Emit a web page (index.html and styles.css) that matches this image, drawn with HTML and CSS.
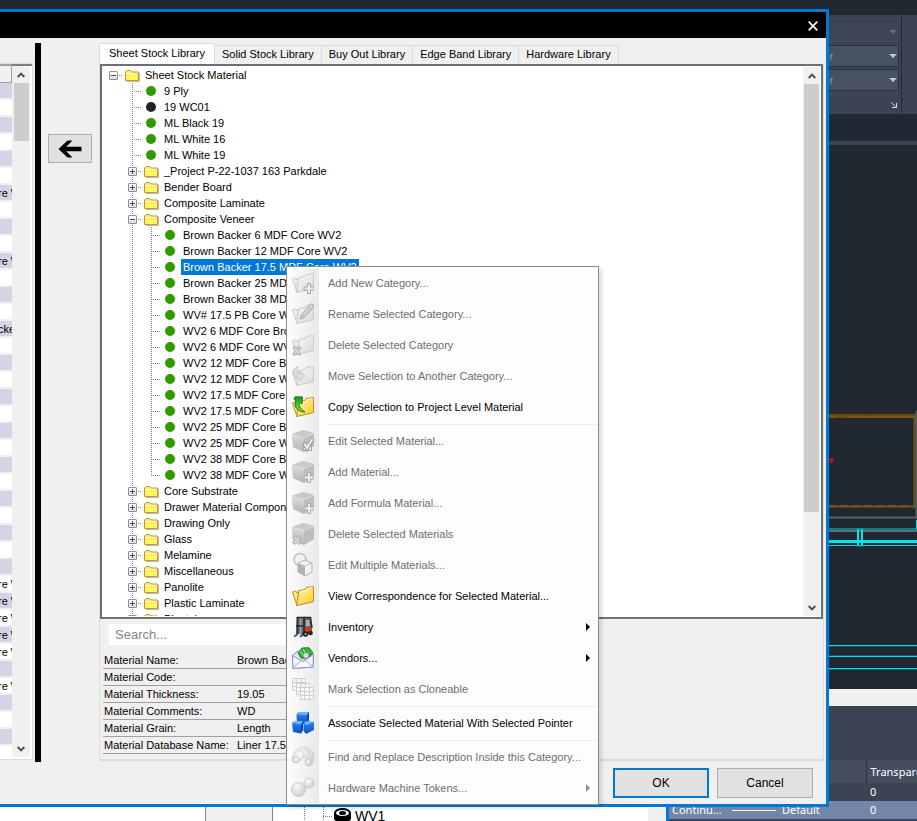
FILE: index.html
```html
<!DOCTYPE html>
<html lang="en">
<head>
<meta charset="utf-8">
<title>Sheet Stock Library</title>
<link rel="stylesheet" href="styles.css">
</head>
<body>
<svg class="defs" aria-hidden="true">
  <defs>
    <linearGradient id="g-gold" x1="0" y1="0" x2="1" y2="1"><stop offset="0" stop-color="#fffbc0"/><stop offset="1" stop-color="#ffc91c"/></linearGradient>
    <linearGradient id="g-pale" x1="0" y1="0" x2="1" y2="1"><stop offset="0" stop-color="#f8f8f8"/><stop offset="1" stop-color="#dadada"/></linearGradient>
    <linearGradient id="g-side" x1="0" y1="0" x2="0" y2="1"><stop offset="0" stop-color="#dcdcdc"/><stop offset="1" stop-color="#b4b4b4"/></linearGradient>
    <linearGradient id="g-green" x1="0" y1="0" x2="0" y2="1"><stop offset="0" stop-color="#1f9a1f"/><stop offset="1" stop-color="#7fe04a"/></linearGradient>
    <linearGradient id="g-blue" x1="0" y1="0" x2="0" y2="1"><stop offset="0" stop-color="#2f8cf5"/><stop offset="1" stop-color="#0a4fbd"/></linearGradient>
    <radialGradient id="g-ball" cx=".38" cy=".3" r=".75"><stop offset="0" stop-color="#fafafa"/><stop offset="1" stop-color="#cccccc"/></radialGradient>
  </defs>
  <symbol id="folder" viewBox="0 0 15 13">
    <path d="M2 12.5H14.5V4" fill="none" stroke="#b9b9b9"/>
    <path d="M.5 11.5V3L2 1.500H5.500L7 3H13.500V11.500Z" fill="#ffee6e" stroke="#cf962c"/>
    <path d="M1.500 4.500H12.500" stroke="#fffbd0"/><path d="M5 8h7v3H3z" fill="#ffff4e"/>
  </symbol>
  <symbol id="dot" viewBox="0 0 10 10"><circle cx="5" cy="5" r="5" fill="currentColor"/></symbol>
  <symbol id="up" viewBox="0 0 8 6"><path d="M.7 5 4 1.600 7.300 5" fill="none" stroke="#505050" stroke-width="2"/></symbol>
  <symbol id="down" viewBox="0 0 8 6"><path d="M.7 1 4 4.400 7.300 1" fill="none" stroke="#505050" stroke-width="2"/></symbol>
  <symbol id="m-folder" viewBox="0 0 22 22">
    <path d="M.5 7 4 6 5 8 7 6 5 20.500Z" fill="url(#g-pale)" stroke="#cacaca"/>
    <path d="M7 5.500 13 4.500 14 2.500 21.500 1.500V16.500L4.500 20.500Z" fill="url(#g-pale)" stroke="#cacaca"/>
  </symbol>
  <symbol id="m-gold" viewBox="0 0 22 22">
    <path d="M.5 7 4 6 5 8 7 6 5 20.500Z" fill="#ffe98a" stroke="#c08a1e"/>
    <path d="M7 5.500 13 4.500 14 2.500 21.500 1.500V16.500L4.500 20.500Z" fill="url(#g-gold)" stroke="#c08a1e"/>
    <path d="M8 6.500 14 5.500 15 3.500 20.500 2.700" fill="none" stroke="#fffce0"/>
  </symbol>
  <symbol id="m-cube" viewBox="0 0 22 22">
    <path d="M0 4 11 0 22 3 22 16 12 22 1 17Z" fill="#d2d2d2"/>
    <path d="M0 4 11 0 22 3 12 7Z" fill="#c9c9c9"/>
    <path d="M0 4 12 7V22L1 17Z" fill="url(#g-side)"/>
    <path d="M12 7 22 3V16L12 22Z" fill="#bdbdbd"/><path d="M1 4.500 12 7.500 21.500 3.500" fill="none" stroke="#dedede"/>
  </symbol>
  <symbol id="m-plus" viewBox="0 0 22 22"><path d="M15.500 11.500h3v3.500h3.500v3h-3.500v3.500h-3v-3.500h-3.500v-3h3.500z" fill="#ececec" stroke="#a6a6a6"/></symbol>
  <symbol id="m-x" viewBox="0 0 22 22"><path d="M.8 14 3 12.500 5 15 7 12.500 9 14 6.700 16.800 9 20 7 21.500 5 19 3 21.500 .8 20 3 16.800Z" fill="#d6d6d6" stroke="#a9a9a9"/></symbol>
</svg>

<div class="desktop">
  <section class="cad" aria-label="Drawing application">
    <div class="ribbon">
      <div class="combos">
        <label class="combo dim"><select aria-label="Object color" disabled><option></option></select></label>
        <label class="combo"><select aria-label="Line weight"><option>ByLayer</option></select></label>
        <label class="combo"><select aria-label="Line type"><option>ByLayer</option></select></label>
        <svg class="launcher" viewBox="0 0 6 6"><path d="M.5 .5 4.500 4.500M5.500 1V5.500H1" fill="none" stroke="#d8dce4"/></svg>
      </div>
      <div class="next-group"></div>
    </div>
    <div class="viewbar"></div>
    <svg class="drawing" viewBox="0 0 88 544" width="88" height="544">
      <path d="M0 271h86" stroke="#7a5607" stroke-width="4"/><path d="M0 270h88M8 272h10M36 270h8" stroke="#5e4408"/>
      <path d="M85.500 271v92" stroke="#7a5607" stroke-width="2"/>
      <path d="M0 361.500h86" stroke="#7a5607" stroke-width="2"/><path d="M0 360.500h86" stroke="#606050" stroke-dasharray="7 5"/>
      <path d="M87.500 266v106M0 372.500h88" stroke="#566068" stroke-width="2"/>
      <path d="M0 314.500h5M4 315 1 318" stroke="#f00" fill="none" stroke-width="1.500"/>
      <path d="M0 384h88" stroke="#008088" stroke-width="2"/><path d="M0 386h88" stroke="#666b70" stroke-width="2"/>
      <path d="M0 396.500h88" stroke="#00e6ee" stroke-width="3"/><path d="M0 400.500h88" stroke="#00d4dc"/>
      <path d="M29 384v17M33 384v17" stroke="#00e6ee" stroke-width="2"/><path d="M28 384h6M28 401h6" stroke="#00a6ae"/>
      <path d="M87.500 375v9" stroke="#00e6ee" stroke-width="1"/>
      <path d="M0 500.500h88M0 511.500h88M0 523.500h88" stroke="#00e0e8"/>
      <path d="M0 501.500h88M0 510.500h88M0 524.500h88" stroke="#0b6268"/>
    </svg>
    <div class="hscroll"></div>
    <div class="layers">
      <table>
        <thead><tr><th></th><th></th><th></th><th>Transparency</th></tr></thead>
        <tbody>
          <tr><td></td><td></td><td></td><td>0</td></tr>
          <tr class="on"><td>Continu...</td><td><i class="weight"></i></td><td>Default</td><td>0</td></tr>
        </tbody>
      </table>
    </div>
  </section>

  <section class="project" aria-label="Project pointers">
    <div class="blank"></div><div class="mid"></div>
    <div class="pointers">
      <i class="guide"></i><i class="guide elbow"></i>
      <svg class="spool" viewBox="0 0 17 15"><path d="M0 5v5c0 6 17 6 17 0V5z" fill="#000"/><ellipse cx="8.500" cy="5" rx="7.500" ry="4" fill="#fff" stroke="#000" stroke-width="2"/><ellipse cx="8.500" cy="5" rx="3.500" ry="2" fill="#000"/></svg>
      <span>WV1</span>
    </div>
    <div class="edge"></div>
  </section>

  <main class="dialog" role="dialog" aria-label="Material library">
    <header class="titlebar">
      <button class="close" aria-label="Close"><svg viewBox="0 0 10 10" width="10" height="10"><path d="M.7 .7 9.300 9.300M9.300 .7 .7 9.300" stroke="#fff" stroke-width="1.700"/></svg></button>
    </header>
    <div class="content">
      <div class="list">
        <table>
          <thead><tr><th></th></tr></thead>
          <tbody>
            <tr><td></td></tr><tr><td></td></tr><tr><td></td></tr><tr><td></td></tr><tr><td></td></tr><tr><td></td></tr>
            <tr><td>re WV2</td></tr><tr><td></td></tr><tr><td></td></tr><tr><td></td></tr>
            <tr><td>re WV2</td></tr><tr><td></td></tr><tr><td></td></tr><tr><td></td></tr>
            <tr><td>cker</td></tr><tr><td></td></tr><tr><td></td></tr><tr><td></td></tr><tr><td></td></tr><tr><td></td></tr>
            <tr><td></td></tr><tr><td></td></tr><tr><td></td></tr><tr><td></td></tr><tr><td></td></tr><tr><td></td></tr>
            <tr><td></td></tr><tr><td></td></tr><tr><td></td></tr>
            <tr><td>re WV2</td></tr><tr><td>re WV2</td></tr><tr><td>re WV2</td></tr><tr><td>re WV2</td></tr><tr><td>re WV2</td></tr>
            <tr><td></td></tr><tr><td>re WV2</td></tr><tr><td></td></tr><tr><td></td></tr><tr><td></td></tr><tr><td></td></tr>
          </tbody>
        </table>
        <div class="scroll"><svg class="arrow"><use href="#up"/></svg><div class="thumb short"></div><svg class="arrow"><use href="#down"/></svg></div>
      </div>
      <div class="splitter"></div>
      <button class="move" aria-label="Assign selected material"><svg viewBox="0 0 24 18" width="24" height="18"><path d="M23.500 9H4" fill="none" stroke="#000" stroke-width="4.500"/><path d="M14.500 .5H9.500L.5 9 9.500 17.500H14.500L6 9Z" fill="#000"/></svg></button>

      <div class="library">
        <div class="tabs" role="tablist">
          <button role="tab" aria-selected="true">Sheet Stock Library</button>
          <button role="tab">Solid Stock Library</button>
          <button role="tab">Buy Out Library</button>
          <button role="tab">Edge Band Library</button>
          <button role="tab">Hardware Library</button>
        </div>
        <div class="page">
          <div class="treebox">
            <ul class="tree">
              <li><i class="c h"><b></b></i><i class="c"><svg class="f"><use href="#folder"/></svg></i><span>Sheet Stock Material</span></li>
              <li><i class="c"></i><i class="c v h"></i><i class="c"><svg class="d"><use href="#dot"/></svg></i><span>9 Ply</span></li>
              <li><i class="c"></i><i class="c v h"></i><i class="c"><svg class="d dark"><use href="#dot"/></svg></i><span>19 WC01</span></li>
              <li><i class="c"></i><i class="c v h"></i><i class="c"><svg class="d"><use href="#dot"/></svg></i><span>ML Black 19</span></li>
              <li><i class="c"></i><i class="c v h"></i><i class="c"><svg class="d"><use href="#dot"/></svg></i><span>ML White 16</span></li>
              <li><i class="c"></i><i class="c v h"></i><i class="c"><svg class="d"><use href="#dot"/></svg></i><span>ML White 19</span></li>
              <li><i class="c"></i><i class="c v h"><b class="plus"></b></i><i class="c"><svg class="f"><use href="#folder"/></svg></i><span>_Project P-22-1037 163 Parkdale</span></li>
              <li><i class="c"></i><i class="c v h"><b class="plus"></b></i><i class="c"><svg class="f"><use href="#folder"/></svg></i><span>Bender Board</span></li>
              <li><i class="c"></i><i class="c v h"><b class="plus"></b></i><i class="c"><svg class="f"><use href="#folder"/></svg></i><span>Composite Laminate</span></li>
              <li><i class="c"></i><i class="c v h"><b></b></i><i class="c"><svg class="f"><use href="#folder"/></svg></i><span>Composite Veneer</span></li>
              <li><i class="c"></i><i class="c v"></i><i class="c v h"></i><i class="c"><svg class="d"><use href="#dot"/></svg></i><span>Brown Backer 6 MDF Core WV2</span></li>
              <li><i class="c"></i><i class="c v"></i><i class="c v h"></i><i class="c"><svg class="d"><use href="#dot"/></svg></i><span>Brown Backer 12 MDF Core WV2</span></li>
              <li><i class="c"></i><i class="c v"></i><i class="c v h"></i><i class="c"><svg class="d"><use href="#dot"/></svg></i><span class="sel">Brown Backer 17.5 MDF Core WV2</span></li>
              <li><i class="c"></i><i class="c v"></i><i class="c v h"></i><i class="c"><svg class="d"><use href="#dot"/></svg></i><span>Brown Backer 25 MDF Core WV2</span></li>
              <li><i class="c"></i><i class="c v"></i><i class="c v h"></i><i class="c"><svg class="d"><use href="#dot"/></svg></i><span>Brown Backer 38 MDF Core WV2</span></li>
              <li><i class="c"></i><i class="c v"></i><i class="c v h"></i><i class="c"><svg class="d"><use href="#dot"/></svg></i><span>WV# 17.5 PB Core WV2</span></li>
              <li><i class="c"></i><i class="c v"></i><i class="c v h"></i><i class="c"><svg class="d"><use href="#dot"/></svg></i><span>WV2 6 MDF Core Brown</span></li>
              <li><i class="c"></i><i class="c v"></i><i class="c v h"></i><i class="c"><svg class="d"><use href="#dot"/></svg></i><span>WV2 6 MDF Core WV2</span></li>
              <li><i class="c"></i><i class="c v"></i><i class="c v h"></i><i class="c"><svg class="d"><use href="#dot"/></svg></i><span>WV2 12 MDF Core Brown</span></li>
              <li><i class="c"></i><i class="c v"></i><i class="c v h"></i><i class="c"><svg class="d"><use href="#dot"/></svg></i><span>WV2 12 MDF Core WV2</span></li>
              <li><i class="c"></i><i class="c v"></i><i class="c v h"></i><i class="c"><svg class="d"><use href="#dot"/></svg></i><span>WV2 17.5 MDF Core Brown</span></li>
              <li><i class="c"></i><i class="c v"></i><i class="c v h"></i><i class="c"><svg class="d"><use href="#dot"/></svg></i><span>WV2 17.5 MDF Core WV2</span></li>
              <li><i class="c"></i><i class="c v"></i><i class="c v h"></i><i class="c"><svg class="d"><use href="#dot"/></svg></i><span>WV2 25 MDF Core Brown</span></li>
              <li><i class="c"></i><i class="c v"></i><i class="c v h"></i><i class="c"><svg class="d"><use href="#dot"/></svg></i><span>WV2 25 MDF Core WV2</span></li>
              <li><i class="c"></i><i class="c v"></i><i class="c v h"></i><i class="c"><svg class="d"><use href="#dot"/></svg></i><span>WV2 38 MDF Core Brown</span></li>
              <li><i class="c"></i><i class="c v"></i><i class="c v h end"></i><i class="c"><svg class="d"><use href="#dot"/></svg></i><span>WV2 38 MDF Core WV2</span></li>
              <li><i class="c"></i><i class="c v h"><b class="plus"></b></i><i class="c"><svg class="f"><use href="#folder"/></svg></i><span>Core Substrate</span></li>
              <li><i class="c"></i><i class="c v h"><b class="plus"></b></i><i class="c"><svg class="f"><use href="#folder"/></svg></i><span>Drawer Material Components</span></li>
              <li><i class="c"></i><i class="c v h"><b class="plus"></b></i><i class="c"><svg class="f"><use href="#folder"/></svg></i><span>Drawing Only</span></li>
              <li><i class="c"></i><i class="c v h"><b class="plus"></b></i><i class="c"><svg class="f"><use href="#folder"/></svg></i><span>Glass</span></li>
              <li><i class="c"></i><i class="c v h"><b class="plus"></b></i><i class="c"><svg class="f"><use href="#folder"/></svg></i><span>Melamine</span></li>
              <li><i class="c"></i><i class="c v h"><b class="plus"></b></i><i class="c"><svg class="f"><use href="#folder"/></svg></i><span>Miscellaneous</span></li>
              <li><i class="c"></i><i class="c v h"><b class="plus"></b></i><i class="c"><svg class="f"><use href="#folder"/></svg></i><span>Panolite</span></li>
              <li><i class="c"></i><i class="c v h"><b class="plus"></b></i><i class="c"><svg class="f"><use href="#folder"/></svg></i><span>Plastic Laminate</span></li>
              <li><i class="c"></i><i class="c v h"><b class="plus"></b></i><i class="c"><svg class="f"><use href="#folder"/></svg></i><span>Plastek</span></li>
            </ul>
            <div class="scroll"><svg class="arrow"><use href="#up"/></svg><div class="thumb long"></div><svg class="arrow"><use href="#down"/></svg></div>
          </div>
          <input class="search" type="text" placeholder="Search..." aria-label="Search materials">
          <table class="details">
            <tr><th>Material Name:</th><td>Brown Backer 17.5 MDF Core WV2</td></tr>
            <tr><th>Material Code:</th><td></td></tr>
            <tr><th>Material Thickness:</th><td>19.05</td></tr>
            <tr><th>Material Comments:</th><td>WD</td></tr>
            <tr><th>Material Grain:</th><td>Length</td></tr>
            <tr><th>Material Database Name:</th><td>Liner 17.5 MDF Core</td></tr>
          </table>
        </div>
        <div class="actions"><button class="ok">OK</button><button>Cancel</button></div>
      </div>
    </div>
  </main>

  <div class="menu" role="menu">
    <button role="menuitem" disabled><svg class="ic" viewBox="0 0 22 22"><use href="#m-folder"/><use href="#m-plus"/></svg>Add New Category...</button>
    <button role="menuitem" disabled><svg class="ic" viewBox="0 0 22 22"><use href="#m-folder"/><path d="M8 16 9.500 11.500 18 1.500 20 .8 21.500 2.500 21 4.500 12.500 14.500Z" fill="#d4d4d4" stroke="#a8a8a8"/><path d="M16 4 19 7M10 12 12 14" stroke="#b0b0b0"/></svg>Rename Selected Category...</button>
    <button role="menuitem" disabled><svg class="ic" viewBox="0 0 22 22"><use href="#m-folder"/><use href="#m-x"/></svg>Delete Selected Category</button>
    <button role="menuitem" disabled><svg class="ic" viewBox="0 0 22 22"><use href="#m-folder"/><path d="M6 1.500C1 3-1 9 3 12c2 1 4 1 5 1v3l5-5-5-5v3C5 9 5 5 6 1.500z" fill="#dcdcdc" stroke="#c8c8c8"/></svg>Move Selection to Another Category...</button>
    <button role="menuitem"><svg class="ic" viewBox="0 0 22 22"><use href="#m-gold"/><path d="M3 .8 10.500 1 10 8 8 6.500C6 9 8 13 13 16 6 16 1 11 4 4.500L2 3.500z" fill="url(#g-green)" stroke="#158015"/></svg>Copy Selection to Project Level Material</button>
    <hr>
    <button role="menuitem" disabled><svg class="ic" viewBox="0 0 22 22"><use href="#m-cube"/><path d="M11.500 12.500h8v8h-8z" fill="#eee" stroke="#a6a6a6"/><path d="M12 13 15 18.500 21 8.500" fill="none" stroke="#9c9c9c" stroke-width="4"/><path d="M12.500 13.500 15 18 20.500 9" fill="none" stroke="#efefef" stroke-width="2"/></svg>Edit Selected Material...</button>
    <button role="menuitem" disabled><svg class="ic" viewBox="0 0 22 22"><use href="#m-cube"/><use href="#m-plus"/></svg>Add Material...</button>
    <button role="menuitem" disabled><svg class="ic" viewBox="0 0 22 22"><use href="#m-cube"/><use href="#m-plus"/></svg>Add Formula Material...</button>
    <button role="menuitem" disabled><svg class="ic" viewBox="0 0 22 22"><use href="#m-cube"/><use href="#m-x"/></svg>Delete Selected Materials</button>
    <button role="menuitem" disabled><svg class="ic" viewBox="0 0 22 22"><circle cx="8" cy="5.500" r="6" fill="#f3f3f3" stroke="#c2c2c2" stroke-width="1.500"/><path d="M6 9 13 6 20 9V18L13 22 6 18Z" fill="#f2f2f2" stroke="#b4b4b4"/><path d="M6 9 13 12V22L6 18Z" fill="#b4b4b4"/><path d="M13 12 20 9" stroke="#c4c4c4"/></svg>Edit Multiple Materials...</button>
    <button role="menuitem"><svg class="ic" viewBox="0 0 22 22"><use href="#m-gold"/></svg>View Correspondence for Selected Material...</button>
    <button role="menuitem"><svg class="ic" viewBox="0 0 22 22"><path d="M12 2h6l2 9v3h-8z" fill="#5d646b"/><path d="M14 4h3l1 6h-4z" fill="#a9b3bb"/><path d="M12 1.500h6.500L20 12" fill="none" stroke="#24282c" stroke-width="1.500"/><path d="M11 12 19 11 20.500 17 11 20Z" fill="#e03414"/><path d="M5 1h7v17H4z" fill="#6d747b"/><path d="M5.500 1v17M12 1v18" stroke="#30363c" stroke-width="2" fill="none"/><path d="M8.500 1v17" stroke="#9aa3aa" stroke-width="1.500"/><path d="M5 1.500h8M4 10h8" stroke="#24282c" stroke-width="1.500"/><path d="M2 20.500 6 18M8 21l3-3" stroke="#50575d" stroke-width="2"/><circle cx="13.500" cy="18" r="2.800" fill="#202020"/><circle cx="18.500" cy="17" r="2.300" fill="#202020"/><circle cx="13.500" cy="18" r="1" fill="#bbb"/></svg>Inventory<i class="sub"></i></button>
    <button role="menuitem"><svg class="ic" viewBox="0 0 22 22"><path d="M.5 8 6 4H17L21.500 7 21 20 1 21.500Z" fill="#e3e4fb" stroke="#8d8fd6"/><path d="M6 6 10 1 17 .8 21 6 15 12 9 11Z" fill="#35b435" stroke="#168316"/><path d="M8 4 12 9M11 2 14 7" stroke="#a8eda0"/><circle cx="14" cy="8.500" r="3" fill="#d4dcd8" stroke="#7f8f88"/><path d="M.5 8.500 11 14.500 21.500 7.500 21 20 1 21.500Z" fill="#f6f6ff" stroke="#8d8fd6"/><path d="M1 21 9 13.500M21 20 13 13" stroke="#a5a6e0"/></svg>Vendors...<i class="sub"></i></button>
    <button role="menuitem" disabled><svg class="ic" viewBox="0 0 22 22"><g fill="#f7f7f7" stroke="#cfcfcf"><path d="M.5 .5h13v12H.5zM.5 4.500h13M.5 8.500h13M4.500 .5v12M9.500 .5v12"/><path d="M4.500 5.500h13v11h-13zM4.500 9.500h13M4.500 13.500h13M8.500 5.500v11M13.500 5.500v11"/><path d="M8.500 9.500h13v12h-13zM8.500 13.500h13M8.500 17.500h13M12.500 9.500v12M17.500 9.500v12"/></g></svg>Mark Selection as Cloneable</button>
    <hr>
    <button role="menuitem"><svg class="ic" viewBox="0 0 22 22"><path d="M4.500 2 7 0H17V9L15 12H5Z" fill="url(#g-blue)"/><path d="M4.500 2.500 7 0H17L15 3Z" fill="#6ab4ff"/><path d="M15 3 17 0V9L15 12Z" fill="#0b48a8"/><path d="M0 11 2.500 9H11V18L9 21.500 1 20Z" fill="url(#g-blue)"/><path d="M0 11 2.500 9H11L9 12.500Z" fill="#6ab4ff"/><path d="M9 12.500 11 9V18L9 21.500Z" fill="#0b48a8"/><path d="M11.500 11 14 9 22 10V18L14 22 11.500 19Z" fill="url(#g-blue)"/><path d="M11.500 11 15 9 22 10 15 13Z" fill="#6ab4ff"/></svg>Associate Selected Material With Selected Pointer</button>
    <hr>
    <button role="menuitem" disabled><svg class="ic" viewBox="0 0 22 22"><path d="M0 14C1 7 6 1 11 1c6 0 11 4 11 10 0 4-2 9-5 9-2 0-4-2-4-5 1-2 1-4-1-6-1 3-4 7-7 8-3 0-5-1-5-3z" fill="url(#g-ball)" stroke="#d0d0d0"/><path d="M6 6c2-2 4-2 6 3M13 3c3 1 5 4 4 8" fill="none" stroke="#d4d4d4"/><ellipse cx="4" cy="13.500" rx="3" ry="2.500" fill="#f0f0f0" stroke="#c8c8c8"/><ellipse cx="16" cy="16" rx="2.500" ry="3" fill="#f0f0f0" stroke="#c8c8c8"/></svg>Find and Replace Description Inside this Category...</button>
    <button role="menuitem" disabled><svg class="ic" viewBox="0 0 22 22"><circle cx="17" cy="6" r="5" fill="url(#g-ball)" stroke="#cccccc"/><circle cx="6.500" cy="12.500" r="7" fill="url(#g-ball)" stroke="#cccccc"/></svg>Hardware Machine Tokens...<i class="sub"></i></button>
  </div>
</div>
</body>
</html>
```
FILE: styles.css
```css
* { box-sizing: border-box; }
html, body { height: 100%; }
body {
  margin: 0;
  font: 11px/16px "Liberation Sans", Arial, sans-serif;
  color: #000;
}
button, input, select { font: inherit; color: inherit; margin: 0; }
table { border-collapse: collapse; }
.defs { position: absolute; width: 0; height: 0; }

.desktop {
  position: relative;
  min-height: 100%;
  overflow: hidden;
  background: #222831;
}

/* Drawing application behind the dialog */
.cad {
  position: absolute;
  inset: 0 0 0 auto;
  width: 249px;
  padding-top: 15px;
  display: flex;
  flex-direction: column;
  background: #222831;
}
.ribbon { display: flex; height: 99px; background: #3c4453; }
.combos {
  flex: 1;
  display: flex;
  flex-direction: column;
  align-items: flex-end;
  gap: 2px;
  padding: 6px 2px 0 0;
  border-right: 1px solid #232933;
}
.combo { position: relative; width: 110px; height: 22px; }
.combo select {
  width: 100%;
  height: 100%;
  padding: 0 20px 0 3px;
  appearance: none;
  border: 1px solid #2c333f;
  border-radius: 0;
  background: #465164;
  color: #8d929c;
}
.combo.dim select { background: #404857; border-color: #383f4d; }
.combo::after {
  content: "";
  position: absolute;
  right: 2px;
  top: 9px;
  border: 4px solid transparent;
  border-top-color: #c3c7ce;
  border-bottom: 0;
}
.combo.dim::after { border-top-color: #686e7a; }
.launcher { width: 6px; height: 6px; margin: 9px 2px 0 0; }
.next-group { width: 15px; }
.viewbar { height: 4px; margin-top: 27px; background: #3c4453; }
.drawing { align-self: flex-end; flex: none; }
.hscroll { height: 17px; background: #f0f0f0; }
.layers {
  flex: 1;
  overflow: hidden;
  padding-top: 54px;
  background: #3c4453;
  color: #fff;
  font: 11px/16px "Noto Sans", sans-serif;
}
.layers table { width: 320px; table-layout: fixed; }
.layers th, .layers td { padding: 0 4px; text-align: left; font-weight: 400; white-space: nowrap; }
.layers th { height: 23px; background: #454e60; border-right: 1px solid #2c333f; }
.layers th:nth-child(1) { width: 60px; }
.layers th:nth-child(2) { width: 50px; }
.layers th:nth-child(3) { width: 88px; }
.layers td { height: 18px; }
.layers .on { background: #7486a8; }
.weight { display: block; width: 44px; height: 1px; background: #fff; }

/* Pointer window behind the dialog */
.project {
  position: absolute;
  left: 0;
  right: 248px;
  bottom: 0;
  height: 16px;
  display: flex;
  background: #fff;
}
.blank { width: 205px; }
.mid { width: 68px; background: #f0f0f0; border: solid #828790; border-width: 0 1px; }
.pointers {
  flex: 1;
  display: flex;
  align-items: flex-start;
  overflow: hidden;
  padding-left: 31px;
  font-size: 14px;
  line-height: 22px;
}
.guide { width: 19px; height: 16px; background: repeating-linear-gradient(#808080 0 1px, transparent 1px 2px) 0 0 / 1px 100% no-repeat; }
.guide.elbow {
  width: 11px;
  background:
    repeating-linear-gradient(#808080 0 1px, transparent 1px 2px) 0 0 / 1px 100% no-repeat,
    repeating-linear-gradient(90deg, #808080 0 1px, transparent 1px 2px) 0 11px / 9px 1px no-repeat;
}
.spool { width: 17px; height: 15px; margin: 3px 4px 0 0; }
.edge { width: 21px; background: #f0f0f0; border-right: 3px solid #0078d7; }

/* Dialog */
.dialog {
  position: absolute;
  inset: 9px 88px 14px 0;
  display: flex;
  flex-direction: column;
  border: 3px solid #0078d4;
  border-left: 0;
  background: #f0f0f0;
}
.titlebar { display: flex; justify-content: flex-end; height: 26px; background: #000; }
.close { width: 26px; padding: 2px 0 0; border: 0; background: none; line-height: 0; }
.content { flex: 1; min-height: 0; display: flex; align-items: flex-start; }

.list {
  width: 33px;
  align-self: stretch;
  margin: 25px 0 44px;
  padding: 0 2px 2px 0;
  display: flex;
  overflow: hidden;
  border: solid #dcdcdc;
  border-width: 1px 1px 1px 0;
  background: #fff;
  box-shadow: inset 0 2px #808080;
}
.list table { width: 12px; flex: none; table-layout: fixed; align-self: flex-start; }
.list th { height: 17px; padding: 0; background: #f0f0f0; border: solid #a0a0a0; border-width: 2px 1px 1px 0; }
.list td {
  height: 17px;
  padding: 0;
  overflow: hidden;
  white-space: nowrap;
  line-height: 14px;
  text-indent: -2px;
  border-bottom: 2px solid #f0f0f0;
}
.list tr:nth-child(odd) td { background: #d5d4e6; }

.scroll {
  flex: none;
  width: 17px;
  display: flex;
  flex-direction: column;
  align-items: center;
  background: #f0f0f0;
}
.list .scroll { width: 18px; margin-top: 2px; }
.arrow { flex: none; width: 8px; height: 6px; margin: 6px 0 5px; }
.thumb { width: 15px; margin-bottom: auto; background: #cdcdcd; }
.thumb.short { height: 58px; }
.thumb.long { height: 78%; }

.splitter { align-self: stretch; width: 6px; margin: 5px 7px 42px 2px; background: #000; }
.move {
  width: 44px;
  height: 29px;
  margin: 96px 7px 0 0;
  padding: 0 1px 0 0;
  border: 1px solid #adadad;
  background: #e1e1e1;
  line-height: 0;
}

.library { flex: 1; min-width: 0; align-self: stretch; display: flex; flex-direction: column; padding: 5px 2px 6px 0; }
.tabs { display: flex; align-items: flex-end; height: 21px; }
.tabs button {
  height: 19px;
  padding: 0 7px 2px;
  border: 1px solid #dcdcdc;
  border-width: 1px 1px 0 0;
  background: #f0f0f0;
  white-space: nowrap;
}
.tabs [aria-selected="true"] { height: 21px; padding: 0 9px 2px; border-left-width: 1px; background: #fff; }
.page {
  flex: 1;
  min-height: 0;
  display: flex;
  flex-direction: column;
  border-right: 1px solid #dcdcdc;
  border-bottom: 2px solid #dcdcdc;
  border-left: 1px solid #dcdcdc;
}
.treebox {
  flex: 1;
  min-height: 0;
  display: flex;
  padding: 1px;
  border: 2px solid #6d7078;
  background: #fff;
}
.tree { flex: 1; margin: 0; padding: 0 0 0 1px; overflow: hidden; list-style: none; }
.tree li { display: flex; align-items: center; height: 16px; white-space: nowrap; }
.tree span { margin-left: 1px; padding: 0 2px; line-height: 16px; }
.tree .sel { background: #0078d7; color: #fff; }
.c {
  flex: none;
  position: relative;
  display: flex;
  align-items: center;
  justify-content: center;
  width: 19px;
  height: 16px;
}
.c.v { background: repeating-linear-gradient(#808080 0 1px, transparent 1px 2px) 9px 0 / 1px 100% no-repeat; }
.c.h { background: repeating-linear-gradient(90deg, #808080 0 1px, transparent 1px 2px) 9px 8px / 10px 1px no-repeat; }
.c.v.h {
  background:
    repeating-linear-gradient(#808080 0 1px, transparent 1px 2px) 9px 0 / 1px 100% no-repeat,
    repeating-linear-gradient(90deg, #808080 0 1px, transparent 1px 2px) 9px 8px / 10px 1px no-repeat;
}
.c.v.h.end { background-size: 1px 8px, 10px 1px; }
.c b {
  width: 9px;
  height: 9px;
  border: 1px solid #919191;
  border-radius: 1px;
  background:
    linear-gradient(#34509c, #34509c) 1px 3px / 5px 1px no-repeat,
    linear-gradient(#fff, #dcdcdc);
}
.c b.plus {
  background:
    linear-gradient(#34509c, #34509c) 1px 3px / 5px 1px no-repeat,
    linear-gradient(#34509c, #34509c) 3px 1px / 1px 5px no-repeat,
    linear-gradient(#fff, #dcdcdc);
}
.f { width: 15px; height: 13px; }
.d { width: 10px; height: 10px; margin-right: 1px; color: #2f9900; }
.d.dark { color: #222; }

.search {
  width: 420px;
  height: 21px;
  margin: 5px 0 7px 9px;
  padding: 0 6px;
  border: 0;
  background: #fff;
  font-size: 13px;
}
.search::placeholder { color: #868686; opacity: 1; }
.details { width: 430px; margin: 0 0 5px 3px; }
.details th, .details td {
  height: 17px;
  padding: 0 1px;
  border-bottom: 1px solid #a0a0a0;
  text-align: left;
  font-weight: 400;
  line-height: 16px;
  white-space: nowrap;
}
.details th { width: 133px; }
.actions { display: flex; justify-content: flex-end; gap: 8px; padding: 7px 11px 0 0; }
.actions button {
  width: 96px;
  height: 30px;
  border: 1px solid #adadad;
  background: #e1e1e1;
  font-size: 12px;
}
.actions .ok { border: 2px solid #0078d7; }

/* Context menu */
.menu {
  position: absolute;
  left: 286px;
  top: 266px;
  width: 313px;
  padding: 0 0 1px;
  border: 1px solid #8b8b8b;
  background: linear-gradient(90deg, #fdfdfd, #e9e9e9) 0 1px / 32px calc(100% - 2px) no-repeat #fdfdfd;
  box-shadow: 3px 3px 4px rgba(0, 0, 0, .14);
}
.menu button {
  display: flex;
  align-items: center;
  width: 100%;
  height: 31px;
  padding: 0 8px 0 5px;
  border: 0;
  background: none;
  text-align: left;
  white-space: nowrap;
}
.menu button:disabled { color: #6d6d6d; }
.menu hr { height: 1px; margin: 2px 0 0 40px; border: 0; background: #ececec; }
.ic { flex: none; width: 22px; height: 22px; margin-right: 14px; overflow: visible; }
.sub { margin-left: auto; border: 4px solid transparent; border-left-color: currentColor; border-right: 0; }
.menu button:disabled .sub { border-left-color: #8d8d8d; }
```
